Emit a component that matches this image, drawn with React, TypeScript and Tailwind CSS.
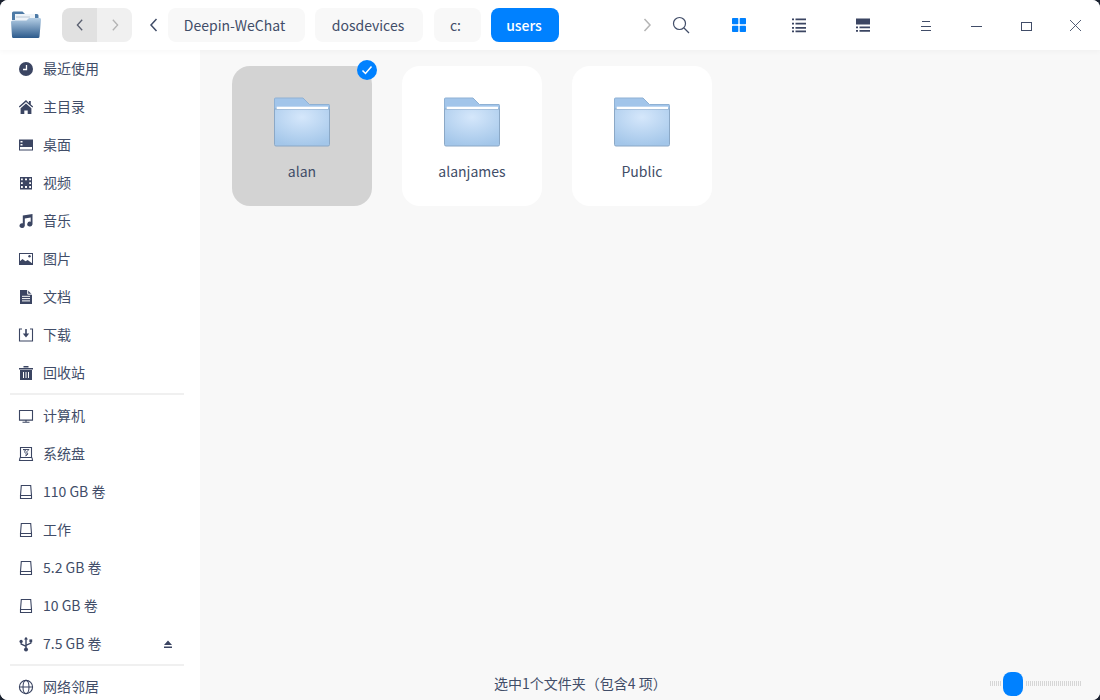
import React from "react";

const NAVY = "#3b4562";

const icons: Record<string, React.ReactNode> = {
  clock: (
    <>
      <circle cx="8" cy="8" r="7" fill={NAVY} />
      <path d="M8.500 4v4.500H5" fill="none" stroke="#fff" strokeWidth="1.3" />
    </>
  ),
  home: <path d="M8 1 .8 7.600l.9 1L8 3l6.300 5.600.9-1-2.400-2.200V2h-1.900v2.100L8 1Zm0 3.600L2.600 9.300V15h3.700v-3.600h3.400V15h3.700V9.300L8 4.600Z" fill={NAVY} />,
  desktop: (
    <>
      <rect x="1" y="2.500" width="14" height="11" fill={NAVY} />
      <rect x="2" y="10" width="12" height="2.500" fill="#fff" />
      <rect x="2.500" y="4" width="2" height="1.500" fill="#fff" />
      <rect x="2.500" y="7" width="2" height="1.500" fill="#fff" />
    </>
  ),
  video: (
    <>
      <rect x="2" y="2" width="12" height="12.500" fill={NAVY} />
      <path d="M3 3.500h1.800v1.800H3zM3 7.300h1.800v1.800H3zM3 11.100h1.800v1.800H3zM11.200 3.500H13v1.800h-1.800zM11.200 7.300H13v1.800h-1.800zM11.200 11.100H13v1.800h-1.800zM7 3.500h2v1.800H7zM7 11.100h2v1.800H7z" fill="#fff" />
    </>
  ),
  music: (
    <path d="M4.800 2.500 14.500 1v10.500h-.1a2.600 2.400 0 1 1-1.700-2.700V4.600L6.800 5.600v7.400h-.1A2.600 2.400 0 1 1 4.800 10.300V2.500Z" fill={NAVY} />
  ),
  image: (
    <>
      <rect x="1.500" y="2.500" width="13" height="11" fill="#fff" stroke={NAVY} />
      <path d="M1 13.500v-2.600l3.500-3 3 2.400 2.200-1.400 5.300 4v.6H1Z" fill={NAVY} />
      <circle cx="11.500" cy="5.300" r="1.200" fill={NAVY} />
    </>
  ),
  doc: (
    <>
      <path d="M2 1h7.500L14 5.500V15H2V1Z" fill={NAVY} />
      <path d="M9.700 1v4.200H14M4 7.300h8M4 9.600h8M4 11.900h8" fill="none" stroke="#fff" />
    </>
  ),
  download: (
    <>
      <path d="M4 2H1.500v12h13V2H12" fill="none" stroke={NAVY} strokeWidth="1.100" />
      <path d="M7.200 2h1.600v4.600h2.400L8 10.400 4.800 6.600h2.400V2Z" fill={NAVY} />
    </>
  ),
  trash: (
    <>
      <path d="M1 3h14v1.400H1zM5.500 1h5v1.600h-5z" fill={NAVY} />
      <path d="M2 5h12v10H2z" fill={NAVY} />
      <path d="M5.500 7v6M8 7v6M10.500 7v6" stroke="#fff" />
    </>
  ),
  monitor: (
    <path d="M1.500 2.500h13v9.600h-13zM4.500 14.300h7M8 12v2" fill="none" stroke={NAVY} strokeWidth="1.100" />
  ),
  system: (
    <>
      <path d="M2.500 1.500h11v10h-11zM2 11.500 1.500 14.500h13l-.5-3M2 14.500h12" fill="none" stroke={NAVY} strokeWidth="1.100" />
      <path d="M5 3.500h6L8.500 6 10 8 7.800 10 8.400 8 6.500 6l1-1.600L5 3.500Z" fill="none" stroke={NAVY} strokeWidth=".9" />
    </>
  ),
  disk: (
    <path d="M3.300 1.500h9.400l.8 10H2.500l.8-10ZM2.500 11.500v3h11v-3" fill="none" stroke={NAVY} strokeWidth="1.100" />
  ),
  usb: (
    <>
      <path d="M8 .8 6 3.600h1.300v5.600L3.700 7.600V6.200H2.500v2.200l4.800 2.400v1.700h1.400V9.800l4.800-2.400V6h-1.200v.8L8.700 8.200V3.600H10L8 .8Z" fill={NAVY} />
      <circle cx="3.100" cy="5.400" r="1.600" fill={NAVY} />
      <rect x="11.400" y="3.400" width="2.800" height="2.800" fill={NAVY} />
      <circle cx="8" cy="13.400" r="2" fill={NAVY} />
    </>
  ),
  globe: (
    <>
      <circle cx="8" cy="8" r="6.600" fill="none" stroke={NAVY} strokeWidth="1.100" />
      <ellipse cx="8" cy="8" rx="3" ry="6.600" fill="none" stroke={NAVY} strokeWidth="1.100" />
      <path d="M1.400 8h13.200" stroke={NAVY} strokeWidth="1.100" />
    </>
  ),
};

function SideIcon({ name }: { name: string }) {
  return (
    <svg width="16" height="16" viewBox="0 0 16 16" className="shrink-0">
      {icons[name]}
    </svg>
  );
}

function SideRow({ icon, label, eject }: { icon: string; label: string; eject?: boolean }) {
  return (
    <div className="flex h-[38px] shrink-0 items-center pl-[18px] pr-[27px]">
      <SideIcon name={icon} />
      <span className="ml-[9px] pb-[2px] text-[14px] text-[#414d68]">{label}</span>
      {eject && (
        <svg width="10" height="10" viewBox="0 0 10 10" className="ml-auto">
          <path d="M5 1.500 9 6H1l4-4.500ZM1 7.500h8V9H1z" fill={NAVY} />
        </svg>
      )}
    </div>
  );
}

function Divider() {
  return (
    <div className="flex h-[5px] shrink-0 items-start pl-[10px] pr-[16px] pt-px">
      <div className="h-[2px] w-full bg-[#f0f0f0]" />
    </div>
  );
}

function Chevron({ dir, color, size = 16 }: { dir: "l" | "r"; color: string; size?: number }) {
  return (
    <svg width={size} height={size} viewBox="0 0 16 16">
      <path d={dir === "l" ? "M10.500 2 5 8l5.500 6" : "M5.500 2 11 8l-5.500 6"} fill="none" stroke={color} strokeWidth="1.500" />
    </svg>
  );
}

function Crumb({ label, box, active }: { label: string; box: string; active?: boolean }) {
  return (
    <div
      className={`flex h-[34px] items-center justify-center rounded-[8px] text-[14px] ${box} ${
        active ? "bg-[#0081ff] font-medium text-white" : "bg-[#f8f8f8] text-[#414d68]"
      }`}
    >
      {label}
    </div>
  );
}

function Folder() {
  return (
    <svg width="60" height="54" viewBox="0 0 60 54">
      <defs>
        <radialGradient id="folderBody" cx="50%" cy="22%" r="80%">
          <stop offset="0%" stopColor="#d5e7fb" />
          <stop offset="100%" stopColor="#a3c6e9" />
        </radialGradient>
      </defs>
      <path d="M2.500 3q0-1 1-1h27.500l6.500 6.500H57q.5 0 .5 1V14h-55Z" fill="#a2c5ea" stroke="#8fb1d4" />
      <path d="M2.500 13h55v35.500q0 1.500-1.500 1.500H4q-1.500 0-1.500-1.500Z" fill="url(#folderBody)" stroke="#8ba8c6" />
      <rect x="4.700" y="10.700" width="51.300" height="2.300" fill="#ffffff" />
    </svg>
  );
}

function Card({ label, selected }: { label: string; selected?: boolean }) {
  return (
    <div
      className={`relative flex h-[140px] w-[140px] flex-col items-center rounded-[18px] pt-[30px] ${
        selected ? "bg-[#d3d3d3]" : "bg-white"
      }`}
    >
      <Folder />
      <span className="mt-[11px] text-[14px] leading-[20px] text-[#414d68]">{label}</span>
      {selected && (
        <div className="absolute right-[-5px] top-[-6px] flex h-[20px] w-[20px] items-center justify-center rounded-full bg-[#0081ff]">
          <svg width="12" height="12" viewBox="0 0 12 12">
            <path d="M1.500 6.500 4.500 9.500 10.500 2.500" fill="none" stroke="#fff" strokeWidth="1.500" />
          </svg>
        </div>
      )}
    </div>
  );
}

function ToolIcon({ width, children }: { width: string; children: React.ReactNode }) {
  return <div className={`flex items-center justify-center ${width}`}>{children}</div>;
}

export default function App() {
  return (
    <div className="h-[700px] w-[1100px] overflow-hidden bg-[#1b2230] font-['Noto_Sans_CJK_SC','Noto_Sans',sans-serif]">
      <div className="flex h-full w-full flex-col overflow-hidden rounded-[8px] bg-white">
        <header className="relative z-10 flex h-[50px] shrink-0 items-center bg-white pl-[11px] shadow-[0_2px_5px_rgba(0,0,0,0.03)]">
          <svg width="30" height="28" viewBox="0 0 30 28" className="mb-[2px] shrink-0">
            <defs>
              <linearGradient id="appFolder" x1="0" y1="0" x2="0" y2="1">
                <stop offset="0%" stopColor="#b5cfe6" />
                <stop offset="100%" stopColor="#2c5a8c" />
              </linearGradient>
            </defs>
            <path d="M1 3q0-1.500 1.500-1.500h9L14 4h12q1.500 0 1.500 1.500V10H1Z" fill="#4d7aa6" />
            <path d="M4 4h20v9H4z" fill="#eef3f8" />
            <path d="M5 7h14" stroke="#b8c6d4" strokeWidth="1" />
            <path d="M0 12q0-1.500 1.500-1.500h14L18 8h11q1 0 1 1.500l-1.500 17q0 1.500-1.500 1.500H2.500Q1 28 1 26.500Z" fill="url(#appFolder)" />
          </svg>
          <div className="ml-[21px] flex h-[34px] w-[70px] shrink-0 overflow-hidden rounded-[8px]">
            <div className="flex w-[35px] items-center justify-center bg-[#e1e1e1]">
              <Chevron dir="l" color="#5a6070" size={14} />
            </div>
            <div className="flex w-[35px] items-center justify-center bg-[#f0f0f0]">
              <Chevron dir="r" color="#b4b4b4" size={14} />
            </div>
          </div>
          <div className="ml-[14px] flex w-[16px] justify-center">
            <Chevron dir="l" color="#414d68" />
          </div>
          <div className="ml-[6px] flex items-center gap-[10px]">
            <Crumb label="Deepin-WeChat" box="w-[137px] pr-[4px]" />
            <Crumb label="dosdevices" box="w-[108px] pr-[2px]" />
            <Crumb label="c:" box="ml-px w-[47px] pr-[4px]" />
            <Crumb label="users" box="w-[68px] pr-[2px]" active />
          </div>
          <div className="ml-[80px] flex w-[16px] justify-center">
            <Chevron dir="r" color="#b5b5b5" />
          </div>
          <ToolIcon width="w-[52px]">
            <svg width="18" height="18" viewBox="0 0 18 18">
              <circle cx="7.500" cy="7.500" r="6" fill="none" stroke="#414d68" strokeWidth="1.200" />
              <path d="m12 12 5 5" stroke="#414d68" strokeWidth="1.200" />
            </svg>
          </ToolIcon>
          <ToolIcon width="w-[64px]">
            <svg width="16" height="16" viewBox="0 0 16 16">
              <rect x="1" y="1" width="6.300" height="6.300" rx=".8" fill="#0081ff" />
              <rect x="8.700" y="1" width="6.300" height="6.300" rx=".8" fill="#0081ff" />
              <rect x="1" y="8.700" width="6.300" height="6.300" rx=".8" fill="#0081ff" />
              <rect x="8.700" y="8.700" width="6.300" height="6.300" rx=".8" fill="#0081ff" />
            </svg>
          </ToolIcon>
          <ToolIcon width="w-[56px]">
            <svg width="16" height="16" viewBox="0 0 16 16">
              <path d="M1 1.500h2v1.800H1zM4.500 1.500H15v1.800H4.500zM1 5.700h2v1.800H1zM4.500 5.700H15v1.800H4.500zM1 9.900h2v1.800H1zM4.500 9.900H15v1.800H4.500zM1 13.500h2v1.800H1zM4.500 13.500H15v1.800H4.500z" fill={NAVY} />
            </svg>
          </ToolIcon>
          <ToolIcon width="w-[72px]">
            <svg width="16" height="16" viewBox="0 0 16 16">
              <path d="M1 1.500h14v6H1zM1 9.500h2v1.800H1zM4.500 9.500H15v1.800H4.500zM1 13h2v1.800H1zM4.500 13H15v1.800H4.500z" fill={NAVY} />
            </svg>
          </ToolIcon>
          <ToolIcon width="w-[54px]">
            <svg width="12" height="12" viewBox="0 0 12 12">
              <path d="M2 2.500h8M1 7.500h10M1 11.500h10" stroke="#414d68" strokeWidth="1" />
            </svg>
          </ToolIcon>
          <ToolIcon width="w-[46px]">
            <svg width="12" height="12" viewBox="0 0 12 12">
              <path d="M1 7.500h11" stroke="#414d68" strokeWidth="1" />
            </svg>
          </ToolIcon>
          <ToolIcon width="w-[54px]">
            <svg width="12" height="12" viewBox="0 0 12 12">
              <rect x="1.500" y="3.500" width="10" height="8" fill="none" stroke="#414d68" strokeWidth="1" />
            </svg>
          </ToolIcon>
          <ToolIcon width="w-[44px]">
            <svg width="12" height="12" viewBox="0 0 12 12">
              <path d="m1 1 11 11M12 1 1 12" stroke="#414d68" strokeWidth=".9" />
            </svg>
          </ToolIcon>
        </header>

        <div className="flex min-h-0 flex-1">
          <aside className="flex w-[200px] shrink-0 flex-col overflow-hidden bg-white">
            <SideRow icon="clock" label="最近使用" />
            <SideRow icon="home" label="主目录" />
            <SideRow icon="desktop" label="桌面" />
            <SideRow icon="video" label="视频" />
            <SideRow icon="music" label="音乐" />
            <SideRow icon="image" label="图片" />
            <SideRow icon="doc" label="文档" />
            <SideRow icon="download" label="下载" />
            <SideRow icon="trash" label="回收站" />
            <Divider />
            <SideRow icon="monitor" label="计算机" />
            <SideRow icon="system" label="系统盘" />
            <SideRow icon="disk" label="110 GB 卷" />
            <SideRow icon="disk" label="工作" />
            <SideRow icon="disk" label="5.2 GB 卷" />
            <SideRow icon="disk" label="10 GB 卷" />
            <SideRow icon="usb" label="7.5 GB 卷" eject />
            <Divider />
            <SideRow icon="globe" label="网络邻居" />
          </aside>

          <main className="flex min-w-0 flex-1 flex-col bg-[#f8f8f8]">
            <div className="flex flex-1 items-start gap-[30px] pl-[32px] pt-[16px]">
              <Card label="alan" selected />
              <Card label="alanjames" />
              <Card label="Public" />
            </div>
            <footer className="flex h-[30px] shrink-0 items-center pl-[294px] pr-[18px] pb-[2px]">
              <span className="pb-[2px] text-[14px] text-[#414d68]">选中1个文件夹（包含4 项）</span>
              <div className="relative ml-auto h-[24px] w-[92px]">
                <div className="absolute left-0 right-0 top-[9px] h-[5px] bg-[repeating-linear-gradient(90deg,#d6d6d6_0,#d6d6d6_1px,transparent_1px,transparent_2px)]" />
                <div className="absolute left-[13px] top-0 h-[24px] w-[20px] rounded-[8px] bg-[#0081ff] ring-2 ring-[#f8f8f8]" />
              </div>
            </footer>
          </main>
        </div>
      </div>
    </div>
  );
}
